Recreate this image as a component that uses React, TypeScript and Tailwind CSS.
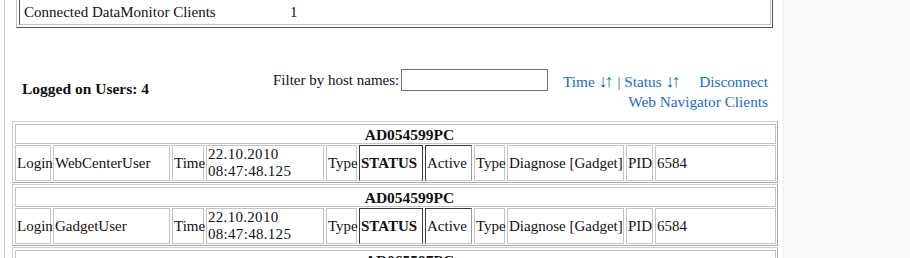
import React from 'react';

interface Cell {
  w: string;
  text: React.ReactNode;
  dark?: 'status' | 'active';
}

const rowCells = (login: string): Cell[] => [
  { w: 'w-[36px]', text: 'Login' },
  { w: 'w-[117px]', text: login },
  { w: 'w-[32px]', text: 'Time' },
  {
    w: 'w-[118px]',
    text: (
      <span className="block leading-[17px] tracking-[0.3px]">
        22.10.2010
        <br />
        08:47:48.125
      </span>
    ),
  },
  { w: 'w-[31px]', text: 'Type' },
  { w: 'w-[64px]', text: 'STATUS', dark: 'status' },
  { w: 'w-[47px]', text: 'Active', dark: 'active' },
  { w: 'w-[31px]', text: 'Type' },
  { w: 'w-[117px]', text: 'Diagnose [Gadget]' },
  { w: 'w-[27px]', text: 'PID' },
  { w: 'w-[121px]', text: '6584' },
];

const sessions = [
  { host: 'AD054599PC', login: 'WebCenterUser' },
  { host: 'AD054599PC', login: 'GadgetUser' },
  { host: 'AD065597PC', login: 'WebCenterUser' },
];

function SortArrows() {
  return (
    <span className="text-[18px] leading-none">
      <span className="tracking-[-3px]">↓</span>↑
    </span>
  );
}

function SessionTable({ host, login }: Readonly<{ host: string; login: string }>) {
  return (
    <div className="ml-[7px] mb-[1px] w-[766px] border border-t-[#cfcfcf] border-l-[#cfcfcf] border-r-[#a8a8a8] border-b-[#a8a8a8] pl-[2px] pt-[2px] pr-[1px] pb-[1px]">
      {/* Host header */}
      <div className="h-[20px] border border-[#c4c4c4] flex items-center justify-center pl-[28px] font-bold text-[15.5px]">
        {host}
      </div>
      {/* Details */}
      <div className="mt-[1px] flex gap-[2px] h-[36px]">
        {rowCells(login).map((c, i) => (
          <div
            key={i}
            className={
              c.dark === 'status'
                ? `${c.w} shrink-0 flex items-center pl-[1px] border border-t-[#3a3a3a] border-l-[#3a3a3a] border-r-[#3a3a3a] border-b-[#c4c4c4] font-bold`
                : c.dark === 'active'
                  ? `${c.w} shrink-0 flex items-center pl-[1px] border border-t-[#3a3a3a] border-l-[#3a3a3a] border-r-[#9a9a9a] border-b-[#c4c4c4]`
                  : `${c.w} shrink-0 flex items-center pl-[1px] border border-[#c4c4c4]`
            }
          >
            {c.text}
          </div>
        ))}
      </div>
    </div>
  );
}

export default function App() {
  return (
    <div className="w-[910px] h-[258px] overflow-hidden bg-white flex font-['Liberation_Serif',serif] text-[15px] text-[#111] leading-[17px]">
      <div className="w-[4px] shrink-0" />
      <div className="w-[1px] shrink-0 bg-[#c6c6c6]" />

      {/* Main frame */}
      <div className="w-[778px] shrink-0">
        <div className="ml-[11px] w-[757px] border-l border-r border-b border-l-[#c0c0c0] border-r-[#555] border-b-[#555] pl-[2px] pr-[1px] pb-[2px]">
          <div className="h-[25px] border-l border-r border-b border-l-[#555] border-r-[#c0c0c0] border-b-[#c0c0c0] flex items-center pl-[4px]">
            <span className="w-[266px]">Connected DataMonitor Clients</span>
            <span>1</span>
          </div>
        </div>

        {/* Filter bar */}
        <div className="mt-[41px] h-[52px] flex items-start">
          <div className="ml-[17px] w-[251px] pt-[11px] font-bold text-[15.5px]">Logged on Users: 4</div>
          <div className="w-[128px] pt-[3px]">Filter by host names:</div>
          <input
            type="text"
            className="w-[147px] h-[22px] border border-[#767676] bg-white outline-none"
          />
          <div className="ml-[15px] w-[205px] pt-[3px] leading-[20px] text-[#1a6ad8] text-[15.3px]">
            <div className="flex justify-between">
              <span>
                Time <SortArrows /> <span className="text-[#555]">|</span> Status <SortArrows />
              </span>
              <span>Disconnect</span>
            </div>
            <div className="text-right">Web Navigator Clients</div>
          </div>
        </div>

        {/* Sessions */}
        {sessions.map((s, i) => (
          <SessionTable key={i} host={s.host} login={s.login} />
        ))}
      </div>

      <div className="flex-1 bg-[#f9f9f9] border-l border-[#efefef]" />
    </div>
  );
}
